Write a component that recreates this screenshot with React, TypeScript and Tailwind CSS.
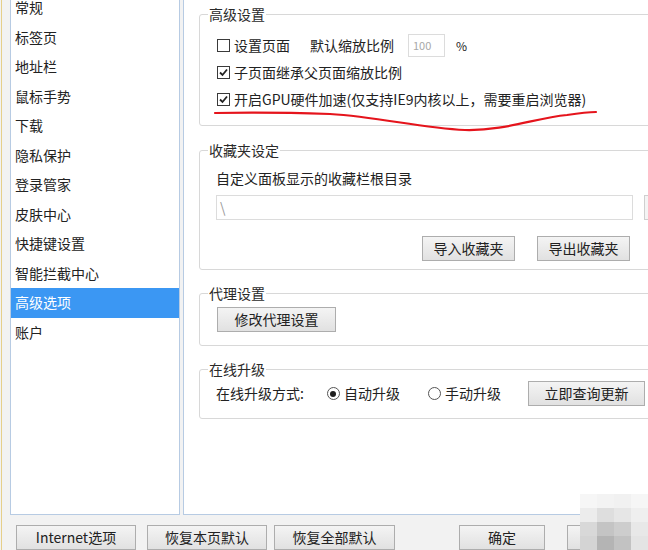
import React from "react";

const navItems = [
  "常规",
  "标签页",
  "地址栏",
  "鼠标手势",
  "下载",
  "隐私保护",
  "登录管家",
  "皮肤中心",
  "快捷键设置",
  "智能拦截中心",
  "高级选项",
  "账户",
];

const Checkbox = ({ checked }: { checked?: boolean }) => (
  <span className="w-[13px] h-[13px] border border-[#3a3a3a] bg-white flex items-center justify-center shrink-0">
    {checked && (
      <svg width="11" height="11" viewBox="0 0 11 11">
        <path d="M2 5.5 L4.5 8 L9 2.5" fill="none" stroke="#222" strokeWidth="1.8" />
      </svg>
    )}
  </span>
);

const Radio = ({ checked }: { checked?: boolean }) => (
  <span className="w-[13px] h-[13px] rounded-full border border-[#555] bg-white flex items-center justify-center shrink-0">
    {checked && <span className="w-[6px] h-[6px] rounded-full bg-[#1e1e1e]" />}
  </span>
);

const Btn = ({
  children,
  className = "",
}: {
  children: React.ReactNode;
  className?: string;
}) => (
  <div
    className={`h-[25px] flex items-center justify-center border border-[#adadad] bg-gradient-to-b from-[#f4f4f4] to-[#e1e1e1] text-[14px] text-[#222] shrink-0 ${className}`}
  >
    {children}
  </div>
);

const Group = ({
  title,
  className = "",
  children,
}: {
  title: string;
  className?: string;
  children: React.ReactNode;
}) => (
  <fieldset className={`w-[470px] border border-[#d8d8d8] rounded-[3px] px-[8px] ${className}`}>
    <legend className="leading-[20px] text-[14px] text-[#2a2a2a] px-[1px]">{title}</legend>
    {children}
  </fieldset>
);

export default function App() {
  return (
    <div className="relative w-[648px] h-[550px] overflow-hidden bg-[#f2f2f2] font-['Noto_Sans_CJK_SC',sans-serif] text-[14px] text-[#222]">
      <div className="ml-[1px] h-full border-l border-[#e6cf8a] flex flex-col">
        <div className="flex h-[515px] shrink-0">
          {/* left nav */}
          <div className="ml-[8px] w-[170px] shrink-0 bg-white border-x border-b border-[#b7cbe3] overflow-hidden">
            <div className="-mt-[7px] flex flex-col">
              {navItems.map((item) => (
                <div
                  key={item}
                  className={`h-[29.5px] flex items-center pl-[4px] ${
                    item === "高级选项" ? "bg-[#3b97f3] text-white" : "text-[#222]"
                  }`}
                >
                  {item}
                </div>
              ))}
            </div>
          </div>

          {/* right panel */}
          <div className="ml-[3px] w-[480px] shrink-0 bg-white border-l border-b border-[#b7cbe3] pl-[15px] pt-[4px]">
            <Group title="高级设置">
              <div className="pl-[9px] pt-[8px] pb-[12px] flex flex-col">
                <div className="h-[27px] flex items-center">
                  <Checkbox />
                  <span className="ml-[4px]">设置页面</span>
                  <span className="ml-[20px]">默认缩放比例</span>
                  <div className="ml-[14px] w-[37px] h-[23px] border border-[#dcdcdc] flex items-center pl-[4px] text-[11px] text-[#a8a8a8]">
                    100
                  </div>
                  <span className="ml-[11px] text-[12px]">%</span>
                </div>
                <div className="h-[27px] flex items-center">
                  <Checkbox checked />
                  <span className="ml-[4px]">子页面继承父页面缩放比例</span>
                </div>
                <div className="h-[27px] flex items-center">
                  <Checkbox checked />
                  <span className="ml-[4px]">开启GPU硬件加速(仅支持IE9内核以上，需要重启浏览器)</span>
                </div>
              </div>
            </Group>

            <Group title="收藏夹设定" className="mt-[14px]">
              <div className="pl-[8px] pt-[8px] pb-[8px] flex flex-col">
                <div className="leading-[20px]">自定义面板显示的收藏栏根目录</div>
                <div className="mt-[7px] flex">
                  <div className="w-[417px] h-[25px] border border-[#dcdcdc] flex items-center pl-[3px] text-[#999]">
                    \
                  </div>
                  <div className="ml-[11px] w-[30px] h-[25px] border border-[#cfcfcf] bg-[#f4f4f4]" />
                </div>
                <div className="mt-[16px] flex">
                  <Btn className="ml-[206px] w-[93px]">导入收藏夹</Btn>
                  <Btn className="ml-[22px] w-[93px]">导出收藏夹</Btn>
                </div>
              </div>
            </Group>

            <Group title="代理设置" className="mt-[13px]">
              <div className="pl-[9px] pt-[4px] pb-[13px] flex">
                <Btn className="w-[119px] h-[24px]">修改代理设置</Btn>
              </div>
            </Group>

            <Group title="在线升级" className="mt-[13px]">
              <div className="pl-[8px] pt-[2px] pb-[12px] flex items-center">
                <span>在线升级方式:</span>
                <span className="ml-[23px]">
                  <Radio checked />
                </span>
                <span className="ml-[4px]">自动升级</span>
                <span className="ml-[28px]">
                  <Radio />
                </span>
                <span className="ml-[4px]">手动升级</span>
                <Btn className="ml-[27px] w-[117px]">立即查询更新</Btn>
              </div>
            </Group>
          </div>
        </div>

        {/* bottom buttons */}
        <div className="mt-[10px] pl-[14px] flex">
          <Btn className="w-[120px]">Internet选项</Btn>
          <Btn className="ml-[11px] w-[120px]">恢复本页默认</Btn>
          <Btn className="ml-[7px] w-[121px]">恢复全部默认</Btn>
          <Btn className="ml-[64px] w-[86px] border-[#3c7fb1]">确定</Btn>
          <Btn className="ml-[22px] w-[86px]"> </Btn>
        </div>
      </div>

      {/* red hand-drawn underline */}
      <svg className="absolute inset-0 pointer-events-none" width="648" height="550">
        <path
          d="M215 113 C 260 112, 300 113, 330 114 C 380 117, 420 128, 465 130 C 505 131, 535 118, 567 115 C 580 113, 590 112, 596 112"
          fill="none"
          stroke="#e5141c"
          strokeWidth="2.2"
          strokeLinecap="round"
        />
      </svg>

      {/* mosaic watermark */}
      <div className="absolute left-[580px] top-[494px] grid grid-cols-4 pointer-events-none">
        <div className="w-[17px] h-[14px] bg-[#f6f6f6]" />
        <div className="w-[17px] h-[14px] bg-[#f3f3f3]" />
        <div className="w-[17px] h-[14px] bg-[#f1f1f1]" />
        <div className="w-[17px] h-[14px] bg-[#f6f6f6]" />
        <div className="w-[17px] h-[14px] bg-[#ececec]" />
        <div className="w-[17px] h-[14px] bg-[#dedede]" />
        <div className="w-[17px] h-[14px] bg-[#e6e6e6]" />
        <div className="w-[17px] h-[14px] bg-[#efefef]" />
        <div className="w-[17px] h-[14px] bg-[#d8d8d8]" />
        <div className="w-[17px] h-[14px] bg-[#c4c4c4]" />
        <div className="w-[17px] h-[14px] bg-[#cdcdcd]" />
        <div className="w-[17px] h-[14px] bg-[#e8e8e8]" />
        <div className="w-[17px] h-[14px] bg-[#d4d4d4]" />
        <div className="w-[17px] h-[14px] bg-[#b4b4b4]" />
        <div className="w-[17px] h-[14px] bg-[#c2c2c2]" />
        <div className="w-[17px] h-[14px] bg-[#e4e4e4]" />
      </div>
    </div>
  );
}
